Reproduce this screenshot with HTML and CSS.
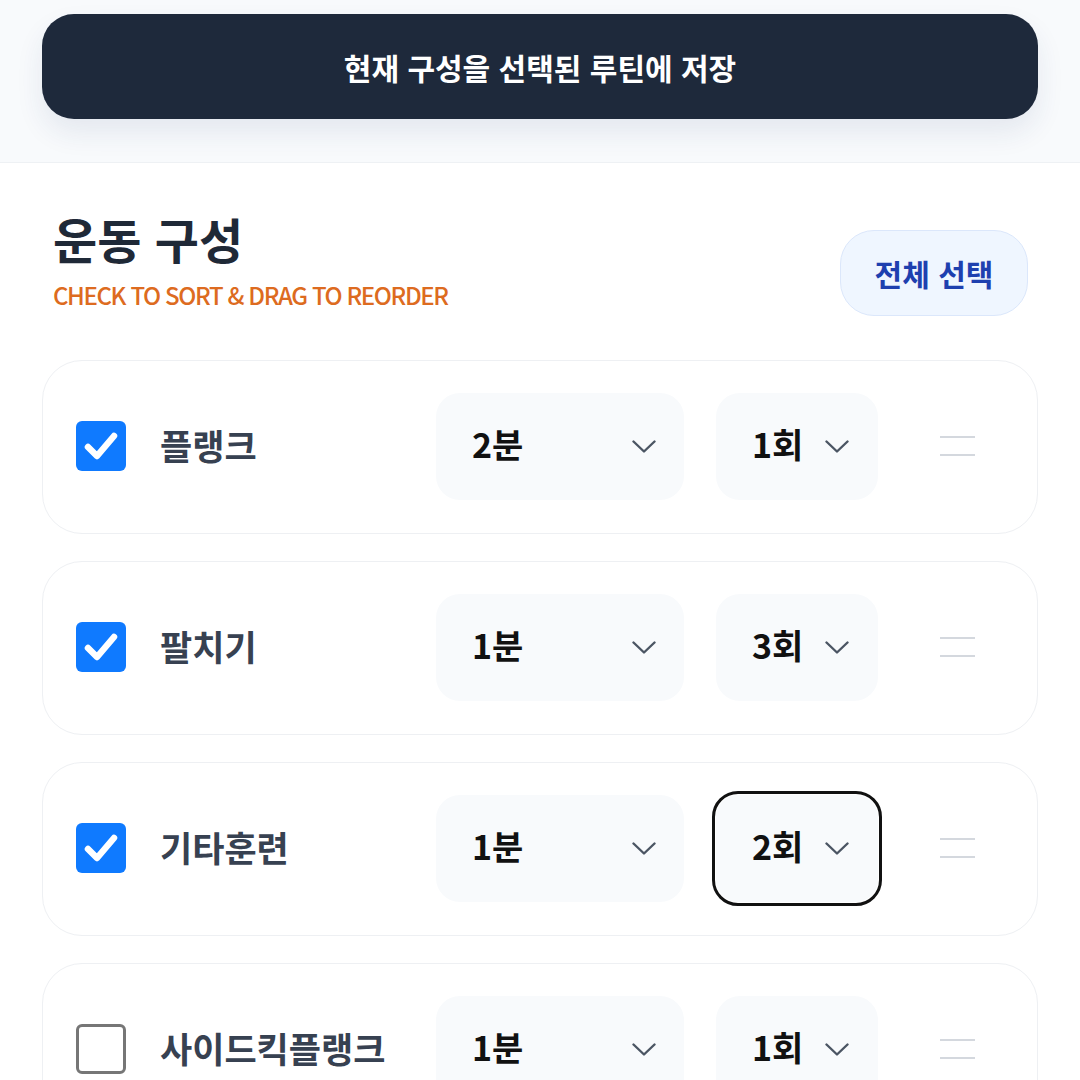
FILE: index.html
```html
<!DOCTYPE html>
<html lang="ko">
<head>
<meta charset="utf-8">
<link rel="stylesheet" href="styles.css">
</head>
<body>
<header class="topbar">
  <button class="save-btn">현재 구성을 선택된 루틴에 저장</button>
</header>
<main class="section">
  <div class="section-head">
    <div class="titles">
      <h1 class="title">운동 구성</h1>
      <p class="subtitle">CHECK TO SORT &amp; DRAG TO REORDER</p>
    </div>
    <button class="select-all">전체 선택</button>
  </div>
  <ul class="list">
    <li class="card">
      <span class="check on"><svg viewBox="0 0 50 50"><path d="M12 26 L21 35 L38 15" fill="none" stroke="#fff" stroke-width="6.5" stroke-linecap="round" stroke-linejoin="round"/></svg></span>
      <span class="name">플랭크</span>
      <div class="sel sel-time"><span class="val">2분</span><svg class="chev" viewBox="0 0 24 13"><path d="M1.5 1.5 L12 11.5 L22.5 1.5" fill="none" stroke="#4b5563" stroke-width="2.4" stroke-linecap="round" stroke-linejoin="round"/></svg></div>
      <div class="sel sel-count"><span class="val">1회</span><svg class="chev" viewBox="0 0 24 13"><path d="M1.5 1.5 L12 11.5 L22.5 1.5" fill="none" stroke="#4b5563" stroke-width="2.4" stroke-linecap="round" stroke-linejoin="round"/></svg></div>
      <span class="handle"><i></i><i></i></span>
    </li>
    <li class="card">
      <span class="check on"><svg viewBox="0 0 50 50"><path d="M12 26 L21 35 L38 15" fill="none" stroke="#fff" stroke-width="6.5" stroke-linecap="round" stroke-linejoin="round"/></svg></span>
      <span class="name">팔치기</span>
      <div class="sel sel-time"><span class="val">1분</span><svg class="chev" viewBox="0 0 24 13"><path d="M1.5 1.5 L12 11.5 L22.5 1.5" fill="none" stroke="#4b5563" stroke-width="2.4" stroke-linecap="round" stroke-linejoin="round"/></svg></div>
      <div class="sel sel-count"><span class="val">3회</span><svg class="chev" viewBox="0 0 24 13"><path d="M1.5 1.5 L12 11.5 L22.5 1.5" fill="none" stroke="#4b5563" stroke-width="2.4" stroke-linecap="round" stroke-linejoin="round"/></svg></div>
      <span class="handle"><i></i><i></i></span>
    </li>
    <li class="card">
      <span class="check on"><svg viewBox="0 0 50 50"><path d="M12 26 L21 35 L38 15" fill="none" stroke="#fff" stroke-width="6.5" stroke-linecap="round" stroke-linejoin="round"/></svg></span>
      <span class="name">기타훈련</span>
      <div class="sel sel-time"><span class="val">1분</span><svg class="chev" viewBox="0 0 24 13"><path d="M1.5 1.5 L12 11.5 L22.5 1.5" fill="none" stroke="#4b5563" stroke-width="2.4" stroke-linecap="round" stroke-linejoin="round"/></svg></div>
      <div class="sel sel-count focus"><span class="val">2회</span><svg class="chev" viewBox="0 0 24 13"><path d="M1.5 1.5 L12 11.5 L22.5 1.5" fill="none" stroke="#4b5563" stroke-width="2.4" stroke-linecap="round" stroke-linejoin="round"/></svg></div>
      <span class="handle"><i></i><i></i></span>
    </li>
    <li class="card">
      <span class="check"></span>
      <span class="name">사이드킥플랭크</span>
      <div class="sel sel-time"><span class="val">1분</span><svg class="chev" viewBox="0 0 24 13"><path d="M1.5 1.5 L12 11.5 L22.5 1.5" fill="none" stroke="#4b5563" stroke-width="2.4" stroke-linecap="round" stroke-linejoin="round"/></svg></div>
      <div class="sel sel-count"><span class="val">1회</span><svg class="chev" viewBox="0 0 24 13"><path d="M1.5 1.5 L12 11.5 L22.5 1.5" fill="none" stroke="#4b5563" stroke-width="2.4" stroke-linecap="round" stroke-linejoin="round"/></svg></div>
      <span class="handle"><i></i><i></i></span>
    </li>
  </ul>
</main>
</body>
</html>
```
FILE: styles.css
```css
* { box-sizing: border-box; }
html, body {
  margin: 0;
  padding: 0;
  background: #ffffff;
  font-family: "Noto Sans CJK KR", "Noto Sans", sans-serif;
  overflow: hidden;
  height: 1080px;
}
.topbar {
  background: #f8fafc;
  height: 163px;
  padding: 14px 42px 0;
  border-bottom: 1px solid #eef1f4;
}
.save-btn {
  display: block;
  width: 100%;
  height: 105px;
  border: none;
  border-radius: 32px;
  background: #1e293b;
  color: #ffffff;
  font-family: inherit;
  font-size: 30px;
  font-weight: 700;
  letter-spacing: 0;
  box-shadow: 0 14px 28px rgba(30, 58, 110, 0.09);
}
.section {
  padding: 47px 42px 0;
}
.section-head {
  display: flex;
  justify-content: space-between;
  align-items: flex-start;
  padding-left: 11px;
  padding-right: 10px;
}
.titles { display: flex; flex-direction: column; }
.title {
  margin: 0;
  font-size: 48px;
  font-weight: 700;
  color: #1f2937;
  line-height: 1.2;
}
.subtitle {
  margin: 13px 0 0;
  font-size: 24px;
  font-weight: 500;
  color: #dd6b20;
  letter-spacing: -1.4px;
  line-height: 1.2;
}
.select-all {
  width: 188px;
  height: 86px;
  margin-top: 20px;
  border: 1px solid #dbe7fb;
  border-radius: 34px;
  background: #eff6ff;
  color: #1e40af;
  font-family: inherit;
  font-size: 30px;
  font-weight: 700;
}
.list {
  list-style: none;
  margin: 44px 0 0;
  padding: 0;
  display: flex;
  flex-direction: column;
  gap: 27px;
}
.card {
  display: flex;
  align-items: center;
  height: 174px;
  padding: 0 62px 0 33px;
  border: 1px solid #eef0f3;
  border-radius: 40px;
  background: #fff;
}
.check {
  width: 50px;
  height: 50px;
  flex: none;
  margin-bottom: 2px;
  border-radius: 6px;
  border: 3px solid #767676;
  background: #fff;
}
.check.on {
  border: none;
  background: #0f7aff;
}
.check svg { display: block; width: 50px; height: 50px; }
.name {
  margin-left: 34px;
  margin-bottom: 6px;
  width: 276px;
  font-size: 35px;
  font-weight: 600;
  color: #374151;
  white-space: nowrap;
}
.sel {
  height: 107px;
  display: flex;
  align-items: center;
  background: #f8fafc;
  border-radius: 24px;
  padding-left: 36px;
  margin-bottom: 2px;
}
.sel .val {
  font-size: 34px;
  font-weight: 700;
  color: #111111;
  margin-bottom: 5px;
}
.chev { width: 24px; height: 13px; display: block; }
.sel-time {
  width: 248px;
  justify-content: space-between;
  padding-right: 28px;
}
.sel-count {
  width: 162px;
  margin-left: 32px;
  gap: 22px;
}
.sel.focus {
  outline: 3.5px solid #111111;
  outline-offset: 1px;
  border-radius: 22px;
}
.handle {
  margin-left: 62px;
  width: 35px;
  display: flex;
  flex-direction: column;
  gap: 16px;
  margin-bottom: 2px;
}
.handle i {
  display: block;
  height: 2px;
  background: #d4d8de;
}
```
